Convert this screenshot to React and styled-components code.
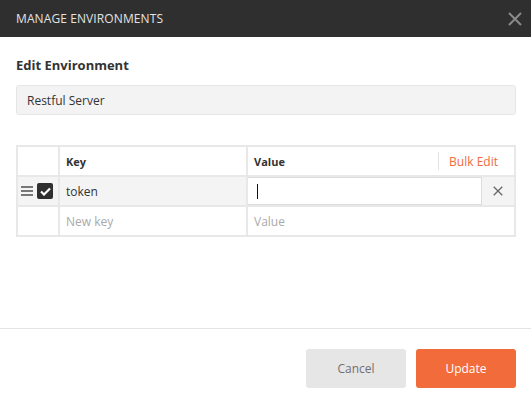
import React from "react";
import styled, { createGlobalStyle } from "styled-components";

const GlobalStyle = createGlobalStyle`
  body {
    margin: 0;
    font-family: "Open Sans", "DejaVu Sans", sans-serif;
    background: #ffffff;
  }
`;

const Modal = styled.div`
  width: 531px;
  height: 402px;
  display: flex;
  flex-direction: column;
  background: #ffffff;
`;

const Header = styled.div`
  height: 37px;
  background: #2f2f2f;
  display: flex;
  align-items: center;
  justify-content: space-between;
  padding: 0 9px 0 16px;
`;

const Title = styled.div`
  color: #e2e2e2;
  font-size: 12px;
  letter-spacing: 0.1px;
`;

const CloseIcon = styled.svg`
  width: 14px;
  height: 14px;
  display: block;
`;

const Body = styled.div`
  flex: 1;
  padding: 19px 15px 0 16px;
`;

const Label = styled.div`
  font-size: 13px;
  font-weight: 700;
  color: #333;
`;

const NameInput = styled.div`
  margin-top: 11px;
  height: 28px;
  border: 1px solid #e6e6e6;
  border-radius: 3px;
  background: #f3f3f3;
  display: flex;
  align-items: center;
  padding: 0 10px;
  font-size: 12px;
  color: #333;
`;

const Table = styled.div`
  margin-top: 30px;
  display: grid;
  grid-template-columns: 40px 186px 1fr;
  grid-auto-rows: 28px;
  gap: 2px;
  padding: 2px;
  background: #e8e8e8;
`;

const Cell = styled.div`
  background: ${(p) => (p.$active ? "#f4f4f4" : "#ffffff")};
  display: flex;
  align-items: center;
  padding: 0 ${(p) => (p.$flush ? "0" : "6px")};
  font-size: ${(p) => (p.$head ? "11px" : "12px")};
  font-weight: ${(p) => (p.$head ? 700 : 400)};
  color: ${(p) => (p.$muted ? "#aaa" : "#333")};
  min-width: 0;
`;

const HeadSpacer = styled.div`
  flex: 1;
`;

const BulkEdit = styled.div`
  border-left: 1px solid #e3e3e3;
  height: 18px;
  display: flex;
  align-items: center;
  padding: 0 10px 0 10px;
  color: #f26b3a;
  font-size: 12px;
  font-weight: 400;
`;

const Handle = styled.div`
  display: flex;
  align-items: center;
  gap: 4px;
  padding-left: 3px;
`;

const Burger = styled.div`
  width: 12px;
  display: flex;
  flex-direction: column;
  gap: 2px;
  span {
    height: 2px;
    background: #777;
  }
`;

const Check = styled.div`
  width: 16px;
  height: 16px;
  border-radius: 2px;
  background: #2f2f2f;
  display: flex;
  align-items: center;
  justify-content: center;
`;

const ValueInput = styled.div`
  flex: 1;
  height: 100%;
  box-sizing: border-box;
  border: 1px solid #dcdcdc;
  border-left: none;
  background: #ffffff;
  display: flex;
  align-items: center;
  padding-left: 9px;
`;

const Caret = styled.span`
  width: 1px;
  height: 15px;
  background: #111;
`;

const Delete = styled.div`
  width: 32px;
  height: 100%;
  display: flex;
  align-items: center;
  justify-content: center;
`;

const Footer = styled.div`
  border-top: 1px solid #e4e4e4;
  height: 74px;
  display: flex;
  align-items: flex-start;
  justify-content: flex-end;
  gap: 10px;
  padding: 20px 15px 0 16px;
  box-sizing: border-box;
`;

const Button = styled.div`
  width: 100px;
  height: 39px;
  border-radius: 3px;
  display: flex;
  align-items: center;
  justify-content: center;
  font-size: 12px;
  background: ${(p) => (p.$primary ? "#f26b3a" : "#e6e6e6")};
  color: ${(p) => (p.$primary ? "#ffffff" : "#707070")};
`;

const Cross = ({ size, color, weight }) => (
  <CloseIcon viewBox="0 0 14 14" style={{ width: size, height: size }}>
    <path d="M1 1L13 13M13 1L1 13" stroke={color} strokeWidth={weight} />
  </CloseIcon>
);

export default function App() {
  return (
    <Modal>
      <GlobalStyle />
      <Header>
        <Title>MANAGE ENVIRONMENTS</Title>
        <Cross size={14} color="#8a8a8a" weight={2} />
      </Header>
      <Body>
        <Label>Edit Environment</Label>
        <NameInput>Restful Server</NameInput>
        <Table>
          <Cell />
          <Cell $head>Key</Cell>
          <Cell $head>
            Value
            <HeadSpacer />
            <BulkEdit>Bulk Edit</BulkEdit>
          </Cell>

          <Cell $active $flush>
            <Handle>
              <Burger>
                <span />
                <span />
                <span />
              </Burger>
              <Check>
                <svg width="11" height="9" viewBox="0 0 11 9">
                  <path d="M1 4.5L4 7.5L10 1.5" stroke="#fff" strokeWidth="2.2" fill="none" />
                </svg>
              </Check>
            </Handle>
          </Cell>
          <Cell $active>token</Cell>
          <Cell $active $flush>
            <ValueInput>
              <Caret />
            </ValueInput>
            <Delete>
              <Cross size={10} color="#666" weight={1.8} />
            </Delete>
          </Cell>

          <Cell />
          <Cell $muted>New key</Cell>
          <Cell $muted>Value</Cell>
        </Table>
      </Body>
      <Footer>
        <Button>Cancel</Button>
        <Button $primary>Update</Button>
      </Footer>
    </Modal>
  );
}
